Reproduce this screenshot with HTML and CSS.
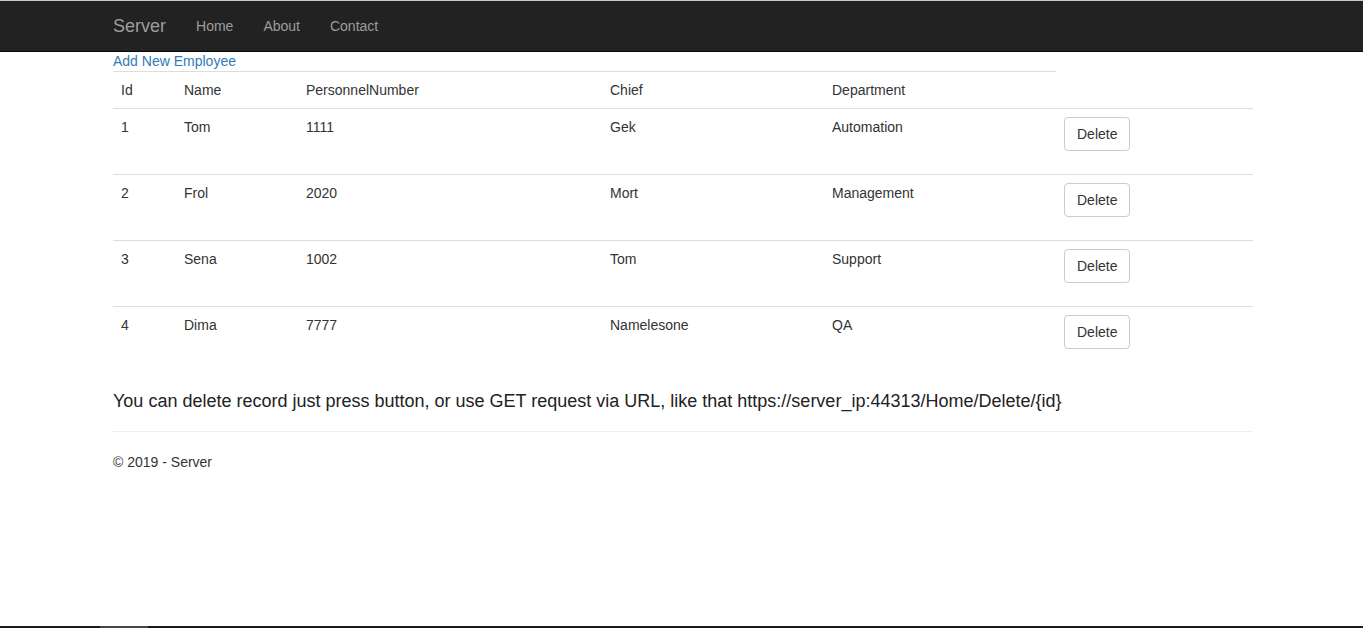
FILE: index.html
```
<!DOCTYPE html>
<html>
<head>
<meta charset="utf-8">
<title>Server</title>
<link rel="stylesheet" href="styles.css">
</head>
<body>
<nav class="navbar">
  <div class="container nav-inner">
    <a class="brand" href="#">Server</a>
    <ul class="nav-links">
      <li><a href="#">Home</a></li>
      <li><a href="#">About</a></li>
      <li><a href="#">Contact</a></li>
    </ul>
  </div>
</nav>
<div class="container body-content">
  <a class="add-link" href="#">Add New Employee</a>
  <table class="table">
    <tr class="head-row">
      <td class="c-id">Id</td>
      <td class="c-name">Name</td>
      <td class="c-num">PersonnelNumber</td>
      <td class="c-chief">Chief</td>
      <td class="c-dep">Department</td>
    </tr>
    <tr>
      <td>1</td><td>Tom</td><td>1111</td><td>Gek</td><td>Automation</td>
      <td class="c-btn"><div class="btn-wrap"><button class="btn">Delete</button></div></td>
    </tr>
    <tr>
      <td>2</td><td>Frol</td><td>2020</td><td>Mort</td><td>Management</td>
      <td class="c-btn"><div class="btn-wrap"><button class="btn">Delete</button></div></td>
    </tr>
    <tr>
      <td>3</td><td>Sena</td><td>1002</td><td>Tom</td><td>Support</td>
      <td class="c-btn"><div class="btn-wrap"><button class="btn">Delete</button></div></td>
    </tr>
    <tr>
      <td>4</td><td>Dima</td><td>7777</td><td>Namelesone</td><td>QA</td>
      <td class="c-btn"><div class="btn-wrap"><button class="btn">Delete</button></div></td>
    </tr>
  </table>
  <h4 class="note">You can delete record just press button, or use GET request via URL, like that https://server_ip:44313/Home/Delete/{id}</h4>
  <hr class="rule">
  <footer class="footer">
    <p>&copy; 2019 - Server</p>
  </footer>
</div>
<div class="taskbar">
  <span class="tb-a"></span><span class="tb-b"></span><span class="tb-c"></span>
</div>
</body>
</html>
```

FILE: styles.css
```
* { box-sizing: border-box; }
html, body { margin: 0; }
body {
  font-family: "Liberation Sans", Arial, Helvetica, sans-serif;
  font-size: 14px;
  line-height: 20px;
  color: #333;
  background: #fff;
  padding-top: 51px;
}
a { color: #337ab7; text-decoration: none; }

.container {
  width: 1170px;
  padding: 0 15px;
  margin-left: 98px;
}

.navbar {
  position: fixed;
  top: 0; left: 0; right: 0;
  height: 52px;
  background: #222;
  border-top: 1px solid #c9c9c9;
  border-bottom: 1px solid #080808;
  z-index: 10;
}
.nav-inner {
  display: flex;
  height: 50px;
}
.brand {
  display: block;
  margin-left: -15px;
  padding: 15px;
  font-size: 18px;
  line-height: 20px;
  height: 50px;
  color: #9d9d9d;
}
.nav-links {
  display: flex;
  list-style: none;
  margin: 0;
  padding: 0;
}
.nav-links a {
  display: block;
  padding: 15px;
  line-height: 20px;
  color: #9d9d9d;
}

.add-link { display: block; line-height: 20px; }

.table {
  width: 1140px;
  border-collapse: collapse;
  border-spacing: 0;
  margin-bottom: 19px;
}
.table td {
  padding: 8px;
  vertical-align: top;
  border-top: 1px solid #ddd;
  line-height: 20px;
}
.c-id { width: 63px; }
.c-name { width: 122px; }
.c-num { width: 304px; }
.c-chief { width: 222px; }
.c-dep { width: 232px; }
.btn-wrap { padding-bottom: 15px; }
.btn {
  display: inline-block;
  font-family: inherit;
  font-size: 14px;
  line-height: 20px;
  color: #333;
  background: #fff;
  border: 1px solid #ccc;
  border-radius: 4px;
  padding: 6px 12px;
  height: 34px;
  margin: 0;
  cursor: pointer;
}

.note {
  margin: 0;
  font-size: 18px;
  font-weight: normal;
  line-height: 20px;
  color: #222;
}
.rule {
  margin: 20px 0;
  border: 0;
  border-top: 1px solid #eee;
  height: 0;
}
.footer p { margin: 0 0 10px; }

.taskbar {
  position: fixed;
  left: 0; right: 0; bottom: 0;
  height: 2px;
  display: flex;
}
.tb-a { width: 100px; background: #1b1c15; }
.tb-b { width: 48px; background: #474747; }
.tb-c { flex: 1; background: #181a1a; }
```
